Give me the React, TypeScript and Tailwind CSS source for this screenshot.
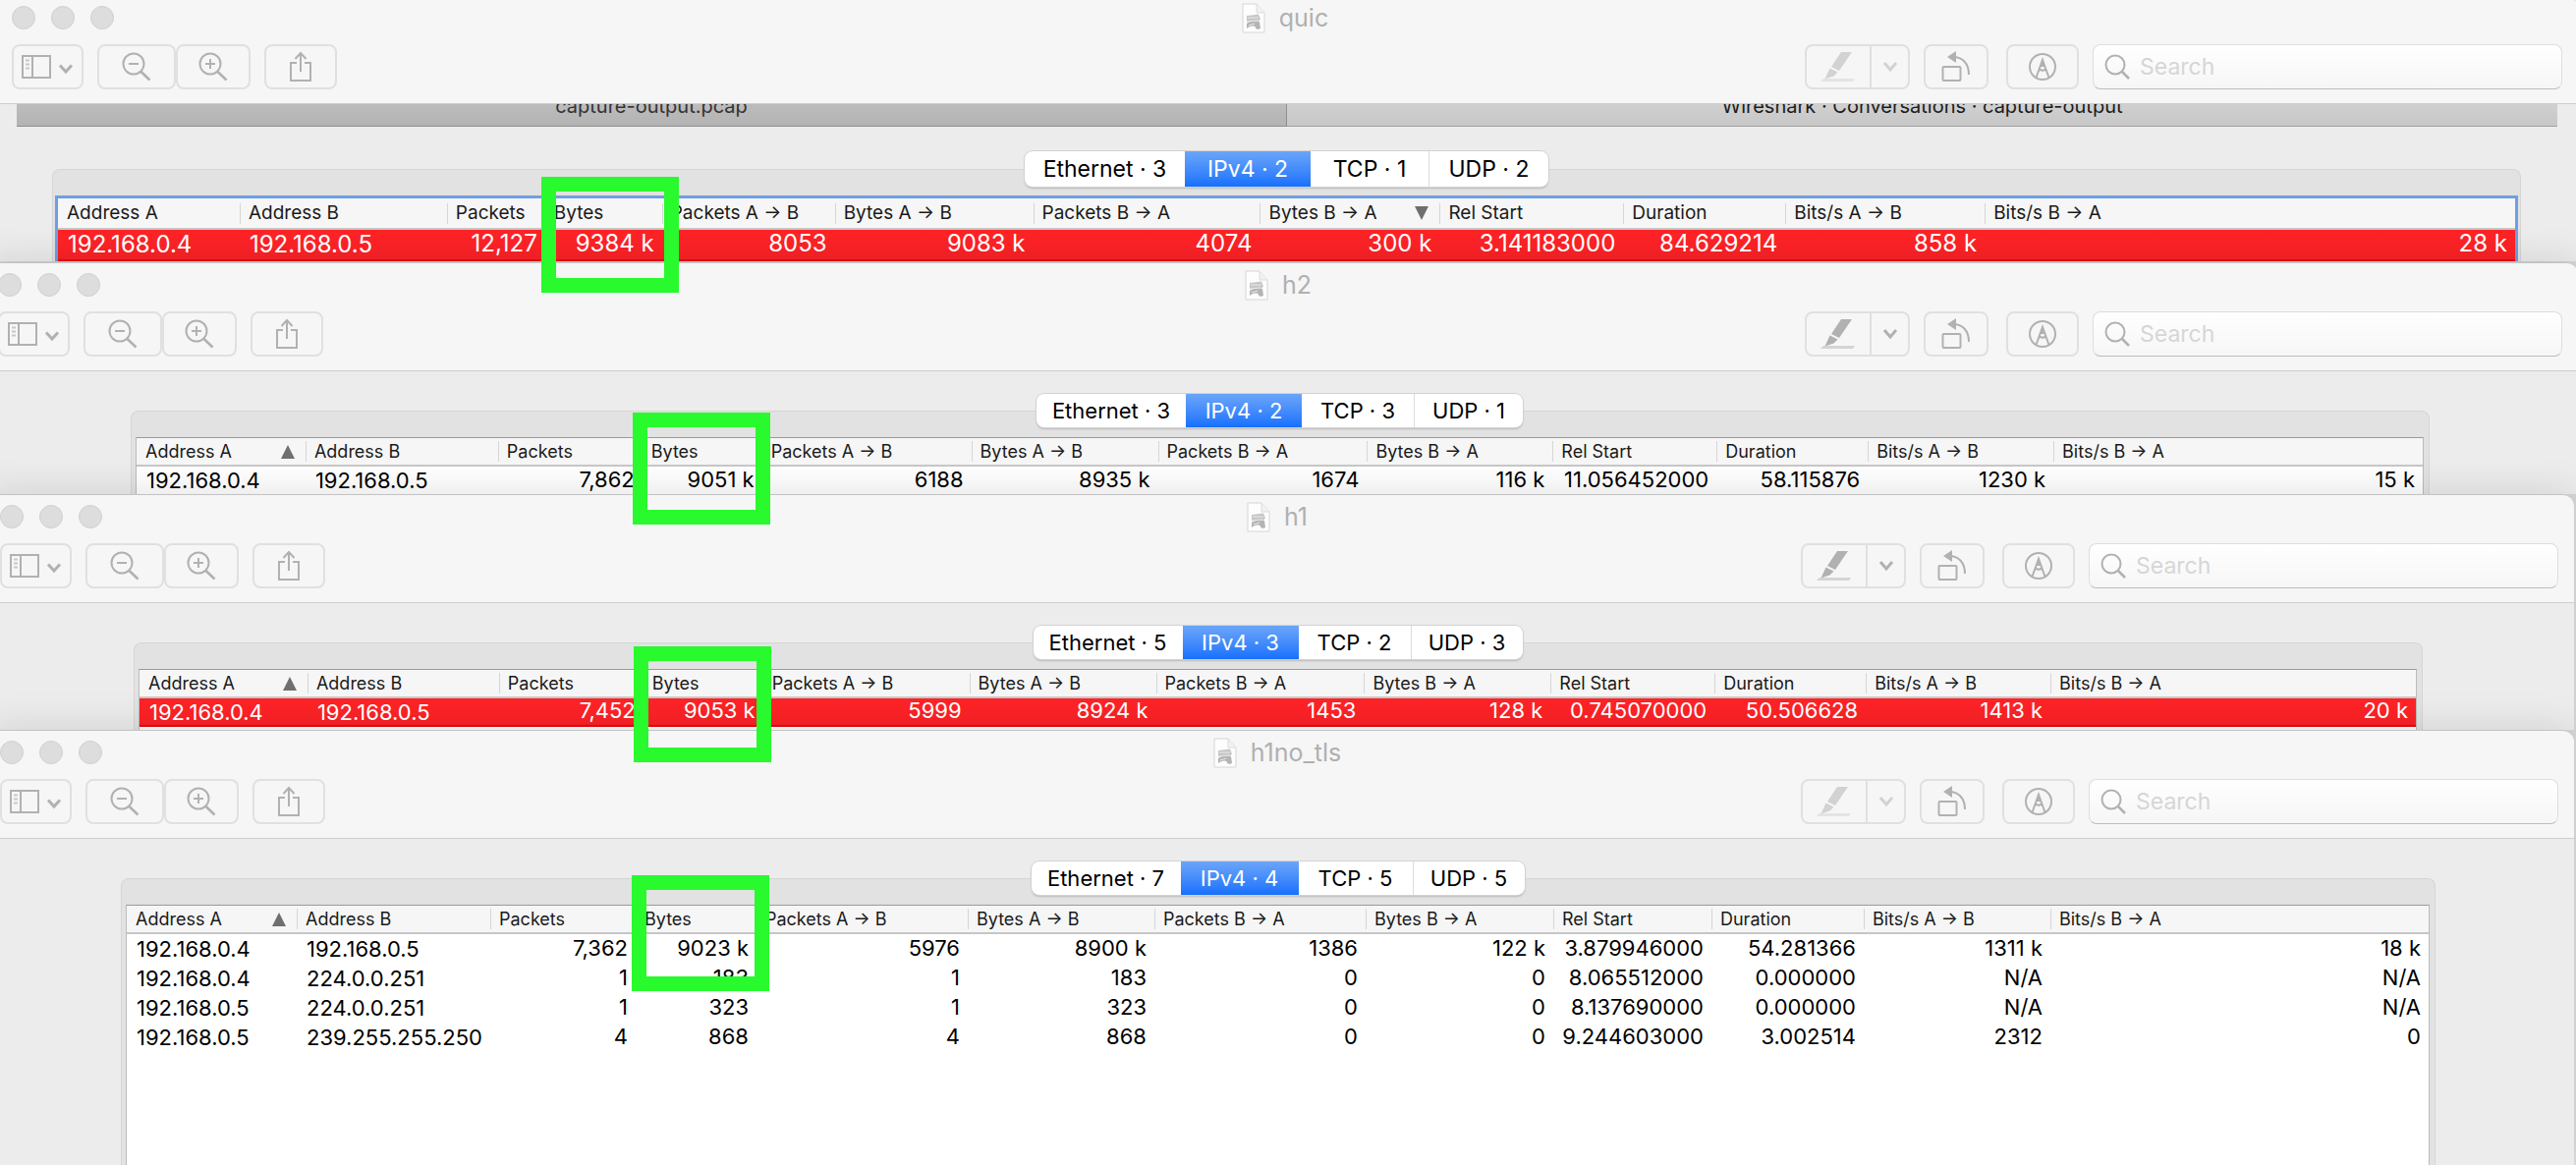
import type { ReactNode } from "react";

type Capture = {
  name: string;
  frame: string;
  inset: string;
  highlighter: boolean;
  large?: boolean;
  strip?: boolean;
  panel: string;
  table: string;
  tabs: string[];
  tabWidths: string[];
  selected: number;
  bounds: number[];
  sorted: number;
  descending?: boolean;
  rowClass: string;
  marker: string;
  rows: string[][];
  tail: string;
};

const COLUMNS = [
  "Address A",
  "Address B",
  "Packets",
  "Bytes",
  "Packets A → B",
  "Bytes A → B",
  "Packets B → A",
  "Bytes B → A",
  "Rel Start",
  "Duration",
  "Bits/s A → B",
  "Bits/s B → A",
];

const RED =
  "bg-linear-to-b from-[#ff2327] to-[#fb2226] text-white border-b-2 border-[#e80a0e]";

const CAPTURES: Capture[] = [
  {
    name: "quic",
    frame: "-mt-[5px] -mr-[2px]",
    inset: "pt-[43px] pl-[53px] pr-[58px]",
    highlighter: false,
    large: true,
    strip: true,
    panel: "px-[2px]",
    table: "mt-[9px] border-3 border-b-0 border-[#6f9fe2] mb-px",
    tabs: ["Ethernet · 3", "IPv4 · 2", "TCP · 1", "UDP · 2"],
    tabWidths: ["w-[163px]", "w-[128px]", "w-[120px]", "w-[122px]"],
    selected: 1,
    bounds: [59, 244, 455, 555, 674, 850, 1052, 1283, 1466, 1653, 1818, 2021, 2561],
    sorted: 7,
    descending: true,
    rowClass: "h-[32px] " + RED,
    marker: "-left-[4px] -right-[17px] -top-[22px] h-[118px]",
    rows: [
      ["192.168.0.4", "192.168.0.5", "12,127", "9384 k", "8053", "9083 k", "4074", "300 k", "3.141183000", "84.629214", "858 k", "28 k"],
    ],
    tail: "",
  },
  {
    name: "h2",
    frame: "-ml-[14px] -mr-[2px]",
    inset: "pt-[40px] pl-[147px] pr-[151px]",
    highlighter: true,
    panel: "pl-[4px] pr-[5px]",
    table: "mt-[10px] border border-b-0 border-[#bcbcbc] border-t-[#9a9a9a]",
    tabs: ["Ethernet · 3", "IPv4 · 2", "TCP · 3", "UDP · 1"],
    tabWidths: ["w-[152px]", "w-[118px]", "w-[114px]", "w-[111px]"],
    selected: 1,
    bounds: [139, 311, 507, 654, 776, 989, 1179, 1392, 1581, 1748, 1902, 2091, 2467],
    sorted: 0,
    rowClass: "h-[28px] bg-white text-black",
    marker: "-left-[10px] -right-[8px] -top-[26px] h-[114px]",
    rows: [
      ["192.168.0.4", "192.168.0.5", "7,862", "9051 k", "6188", "8935 k", "1674", "116 k", "11.056452000", "58.115876", "1230 k", "15 k"],
    ],
    tail: "",
  },
  {
    name: "h1",
    frame: "-ml-[12px] mr-[2px]",
    inset: "pt-[40px] pl-[148px] pr-[154px]",
    highlighter: true,
    panel: "pl-[4px] pr-[5px]",
    table: "mt-[10px] border border-b-0 border-[#bcbcbc] border-t-[#9a9a9a]",
    tabs: ["Ethernet · 5", "IPv4 · 3", "TCP · 2", "UDP · 3"],
    tabWidths: ["w-[152px]", "w-[118px]", "w-[114px]", "w-[114px]"],
    selected: 1,
    bounds: [142, 313, 508, 655, 777, 987, 1177, 1389, 1579, 1746, 1900, 2088, 2460],
    sorted: 0,
    rowClass: "h-[29px] " + RED,
    marker: "-left-[10px] -right-[8px] -top-[24px] h-[118px]",
    rows: [
      ["192.168.0.4", "192.168.0.5", "7,452", "9053 k", "5999", "8924 k", "1453", "128 k", "0.745070000", "50.506628", "1413 k", "20 k"],
    ],
    tail: "pb-[3px]",
  },
  {
    name: "h1no_tls",
    frame: "-ml-[12px] mr-[2px]",
    inset: "pt-[40px] pl-[135px] pr-[141px]",
    highlighter: false,
    panel: "pl-[4px] pr-[5px]",
    table: "mt-[10px] border border-b-0 border-[#bcbcbc] border-t-[#9a9a9a]",
    tabs: ["Ethernet · 7", "IPv4 · 4", "TCP · 5", "UDP · 5"],
    tabWidths: ["w-[152px]", "w-[120px]", "w-[116px]", "w-[114px]"],
    selected: 1,
    bounds: [130, 303, 500, 648, 771, 986, 1176, 1391, 1582, 1743, 1898, 2088, 2473],
    sorted: 0,
    rowClass: "h-[30px] bg-white text-black",
    marker: "-left-[4px] -right-[13px] -top-[31px] h-[118px]",
    rows: [
      ["192.168.0.4", "192.168.0.5", "7,362", "9023 k", "5976", "8900 k", "1386", "122 k", "3.879946000", "54.281366", "1311 k", "18 k"],
      ["192.168.0.4", "224.0.0.251", "1", "183", "1", "183", "0", "0", "8.065512000", "0.000000", "N/A", "N/A"],
      ["192.168.0.5", "224.0.0.251", "1", "323", "1", "323", "0", "0", "8.137690000", "0.000000", "N/A", "N/A"],
      ["192.168.0.5", "239.255.255.250", "4", "868", "4", "868", "0", "0", "9.244603000", "3.002514", "2312", "0"],
    ],
    tail: "pb-[115px]",
  },
];

function ToolButton({ label, width, children }: { label: string; width: string; children: ReactNode }) {
  return (
    <button
      type="button"
      aria-label={label}
      className={`flex h-[46px] items-center justify-center rounded-lg border-2 border-[#e0e0e0] bg-[#f6f6f6] text-[#b1b1b1] ${width}`}
    >
      {children}
    </button>
  );
}

function SidebarIcon() {
  return (
    <svg width="54" height="26" viewBox="0 0 54 26" fill="none" stroke="currentColor" strokeWidth="2">
      <rect x="1" y="2" width="28" height="22" />
      <path d="M11 2v22" />
      <path d="M4 6.500h4M4 10.500h4M4 14.500h4" stroke="#c8c8c8" />
      <path d="M39 11.500l6 6.500 6-6.500" strokeWidth="3" />
    </svg>
  );
}

function MagnifierIcon({ plus }: { plus?: boolean }) {
  return (
    <svg width="30" height="30" viewBox="0 0 30 30" fill="none" stroke="currentColor" strokeWidth="2">
      <circle cx="12" cy="12" r="10.500" />
      <path d="M19 19.500l9.500 9" strokeWidth="2.500" />
      <path d={plus ? "M7 12h10M12 7v10" : "M7 12h10"} />
    </svg>
  );
}

function ShareIcon() {
  return (
    <svg width="24" height="32" viewBox="0 0 24 32" fill="none" stroke="currentColor" strokeWidth="2">
      <path d="M8 12H2v18h20V12h-6" />
      <path d="M12 21V2" />
      <path d="M6.500 8L12 2l5.500 6" />
    </svg>
  );
}

function HighlighterIcon() {
  return (
    <svg width="36" height="32" viewBox="0 0 36 32" fill="currentColor">
      <path d="M21 1h11L19 20l-8-4z" />
      <path d="M9.500 17.500l8 4-4 4-9 3z" />
      <path d="M3 28h32l-2 3H0z" opacity="0.5" />
    </svg>
  );
}

function RotateIcon() {
  return (
    <svg width="30" height="32" viewBox="0 0 30 32" fill="none" stroke="currentColor" strokeWidth="2">
      <rect x="1.500" y="16" width="18" height="14" rx="1" />
      <path d="M12 6c9 0 16 6 16 18" />
      <path d="M15 0v12L6 6z" fill="currentColor" stroke="none" />
    </svg>
  );
}

function MarkupIcon() {
  return (
    <svg width="30" height="30" viewBox="0 0 30 30" fill="none" stroke="currentColor" strokeWidth="2">
      <circle cx="15" cy="15" r="13" />
      <path d="M8.500 26l6.500-18 6.500 18M11.500 19c1-1.500 2.300-1.500 3.500 0 1.200-1.500 2.500-1.500 3.500 0" />
      <path d="M15 6l-3 9h6z" fill="currentColor" stroke="none" />
    </svg>
  );
}

function DocumentIcon() {
  return (
    <svg width="24" height="31" viewBox="0 0 24 31" fill="none">
      <path d="M1 1h14l8 9v20H1z" fill="#fdfdfd" stroke="#d6d6d6" />
      <path d="M15 1v9h8" fill="#f1f1f1" stroke="#dcdcdc" />
      <path d="M5 13l12-1.500 2 5-2 2-12 1z" fill="#c6c6c6" />
      <path d="M5 21c4-3 9-3 13-2l1 7c-2 1.500-5 1-5.500-2-3-1-6 0-8.500 2z" fill="#b4b4b4" />
      <path d="M6 15h11M5 19l11-1M7 23l6-2" stroke="#e9e9e9" />
    </svg>
  );
}

function SortMark({ descending }: { descending?: boolean }) {
  return (
    <svg width="14" height="14" viewBox="0 0 14 14" fill="#6f6f6f" aria-hidden="true">
      <path d={descending ? "M0 0h14L7 14z" : "M0 14h14L7 0z"} />
    </svg>
  );
}

function WindowHeader({ name, highlighter }: { name: string; highlighter: boolean }) {
  const tone = highlighter ? "text-[#b1b1b1]" : "text-[#d2d2d2]";
  return (
    <header className="rounded-tr-xl border-t border-b border-t-[#c3c3c3] border-b-[#cdcdcd] bg-[#f6f6f6] pt-1 pr-4 pl-3">
      <div className="grid h-9 grid-cols-[1fr_auto_1fr] items-center">
        <div className="flex gap-4">
          <span className="size-6 rounded-full border border-[#d0d0d0] bg-[#dddddd]" />
          <span className="size-6 rounded-full border border-[#d0d0d0] bg-[#dddddd]" />
          <span className="size-6 rounded-full border border-[#d0d0d0] bg-[#dddddd]" />
        </div>
        <h2 className="flex items-center gap-[14px] pr-1 text-[25px] leading-9 text-[#b0b0b0]">
          <DocumentIcon />
          {name}
        </h2>
      </div>
      <div className="mt-[9px] mb-[14px] flex">
        <ToolButton label="Sidebar view" width="w-[73px]"><SidebarIcon /></ToolButton>
        <div className="mx-[14px] flex">
          <ToolButton label="Zoom out" width="w-[80px]"><MagnifierIcon /></ToolButton>
          <ToolButton label="Zoom in" width="w-[76px]"><MagnifierIcon plus /></ToolButton>
        </div>
        <ToolButton label="Share" width="w-[74px]"><ShareIcon /></ToolButton>
        <div className={`ml-auto flex h-[46px] rounded-lg border-2 border-[#e0e0e0] ${tone}`}>
          <button type="button" aria-label="Highlight" className="flex w-[66px] items-center justify-center border-r-2 border-[#e0e0e0]">
            <HighlighterIcon />
          </button>
          <button type="button" aria-label="Highlight colour" className="flex w-[37px] items-center justify-center">
            <svg width="16" height="12" viewBox="0 0 16 12" fill="none" stroke="currentColor" strokeWidth="3">
              <path d="M2 2l6 7 6-7" />
            </svg>
          </button>
        </div>
        <div className="mr-[18px] ml-[14px]">
          <ToolButton label="Rotate" width="w-[66px]"><RotateIcon /></ToolButton>
        </div>
        <ToolButton label="Markup" width="w-[74px]"><MarkupIcon /></ToolButton>
        <label className="ml-[14px] flex h-[46px] w-[478px] items-center gap-[10px] rounded-lg border border-[#dedede] border-b-[#bdbdbd] bg-linear-to-b from-white to-[#f6f6f6] pl-[11px] text-[#b1b1b1]">
          <svg width="26" height="26" viewBox="0 0 26 26" fill="none" stroke="currentColor" strokeWidth="2">
            <circle cx="11" cy="11" r="9.500" />
            <path d="M18 18l7 7" strokeWidth="2.500" />
          </svg>
          <input
            type="search"
            aria-label={`Search ${name}`}
            placeholder="Search"
            className="min-w-0 flex-1 bg-transparent text-[23px] leading-7 outline-none placeholder:text-[#d6d6d6]"
          />
        </label>
      </div>
    </header>
  );
}

function DocumentStrip() {
  return (
    <div className="mr-[21px] ml-[17px] grid grid-cols-2 text-center text-xl leading-5">
      <div className="h-[23px] overflow-hidden border-r border-b border-[#909090] bg-linear-to-b from-[#bcbcbc] to-[#b3b3b3] text-[#333333]">
        <p className="-mt-2">capture-output.pcap</p>
      </div>
      <div className="h-[23px] overflow-hidden border-b border-[#a2a2a2] bg-linear-to-b from-[#d0d0d0] to-[#c7c7c7] text-[#1c1c1c]">
        <p className="-mt-2">Wireshark · Conversations · capture-output</p>
      </div>
    </div>
  );
}

function ProtocolTabs({ capture }: { capture: Capture }) {
  return (
    <div
      role="tablist"
      className={`mx-auto flex w-fit overflow-hidden rounded-lg bg-white shadow-[0_0_0_1px_#d2d2d2,0_2px_2px_rgba(0,0,0,0.18)] ${
        capture.large ? "-mt-[19px] h-9 text-[23px]" : "-mt-[18px] h-[34px] text-[22px]"
      }`}
    >
      {capture.tabs.map((tab, i) => {
        const active = i === capture.selected;
        return (
          <button
            key={tab}
            type="button"
            role="tab"
            aria-selected={active}
            className={`${capture.tabWidths[i]} whitespace-nowrap ${
              active ? "bg-linear-to-b from-[#6ba5f9] to-[#1470fd] text-white" : "text-black"
            } ${i === 3 ? "border-l border-[#dcdcdc]" : ""}`}
          >
            {tab}
          </button>
        );
      })}
    </div>
  );
}

function ConversationTable({ capture }: { capture: Capture }) {
  const { bounds } = capture;
  const total = bounds[bounds.length - 1] - bounds[0];
  return (
    <div className={`bg-white ${capture.table} ${capture.tail}`}>
      <table className="w-full table-fixed border-separate border-spacing-0 text-left">
        <colgroup>
          {COLUMNS.map((column, i) => (
            <col key={column} style={{ width: `${((bounds[i + 1] - bounds[i]) / total) * 100}%` }} />
          ))}
        </colgroup>
        <thead>
          <tr className={capture.large ? "h-8 text-[19px]" : "h-[29px] text-lg"}>
            {COLUMNS.map((column, i) => (
              <th key={column} scope="col" className="relative border-b-2 border-[#c6c6c6] bg-[#f6f6f6] p-0 font-normal text-[#1a1a1a]">
                <div
                  className={`flex h-[21px] items-center justify-between border-l pr-[11px] pl-2 leading-5 whitespace-nowrap ${
                    i === 0 ? "border-transparent" : "border-[#d6d6d6]"
                  }`}
                >
                  {column}
                  {i === capture.sorted && <SortMark descending={capture.descending} />}
                </div>
                {i === 3 && <span className={`absolute z-20 border-15 border-[#28fa2d] ${capture.marker}`} />}
              </th>
            ))}
          </tr>
        </thead>
        <tbody>
          {capture.rows.map((row) => (
            <tr key={row.join()} className={capture.large ? "text-2xl leading-[26px]" : "text-[22px] leading-6"}>
              {row.map((value, i) => (
                <td
                  key={COLUMNS[i]}
                  className={`whitespace-nowrap ${capture.rowClass} ${i < 2 ? "p-0 pl-[10px]" : "p-0 pr-2 pb-[3px] text-right"}`}
                >
                  {value}
                </td>
              ))}
            </tr>
          ))}
        </tbody>
      </table>
    </div>
  );
}

function CaptureWindow({ capture }: { capture: Capture }) {
  return (
    <section className={`rounded-tr-xl bg-[#ececec] shadow-[0_0_40px_rgba(0,0,0,0.13)] ${capture.frame}`}>
      <WindowHeader name={capture.name} highlighter={capture.highlighter} />
      {capture.strip && <DocumentStrip />}
      <div className={capture.inset}>
        <div className={`rounded-t-lg border border-b-0 border-[#d6d6d6] bg-[#e2e2e2] ${capture.panel}`}>
          <ProtocolTabs capture={capture} />
          <ConversationTable capture={capture} />
        </div>
      </div>
    </section>
  );
}

export default function App() {
  return (
    <main className="flow-root overflow-hidden bg-[#dedede] font-['Inter',sans-serif]">
      {CAPTURES.map((capture) => (
        <CaptureWindow key={capture.name} capture={capture} />
      ))}
    </main>
  );
}
